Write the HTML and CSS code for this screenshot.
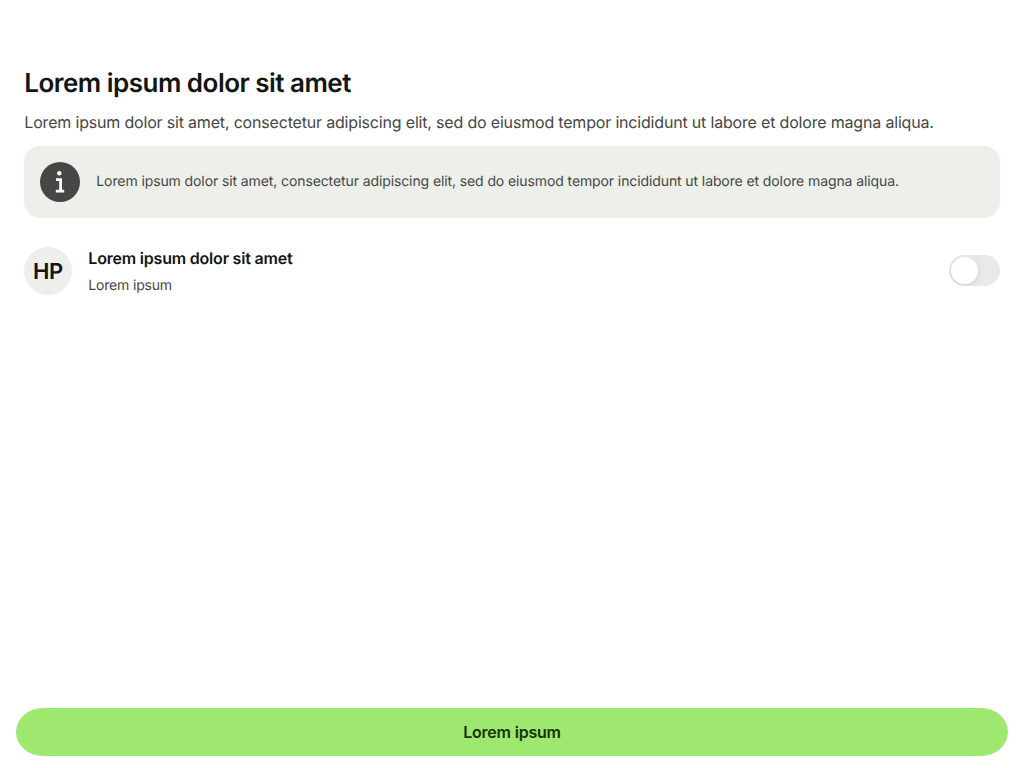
FILE: index.html
```html
<!DOCTYPE html>
<html lang="en">
<head>
<meta charset="utf-8">
<title>Settings</title>
<link rel="stylesheet" href="styles.css">
</head>
<body>
<main class="screen">
  <section class="content">
    <h1 class="title">Lorem ipsum dolor sit amet</h1>
    <p class="lead">Lorem ipsum dolor sit amet, consectetur adipiscing elit, sed do eiusmod tempor incididunt ut labore et dolore magna aliqua.</p>
    <div class="notice">
      <svg class="notice-icon" viewBox="0 0 40 40" aria-hidden="true">
        <circle cx="20" cy="20" r="20" fill="#454745"/>
        <circle cx="19.3" cy="11.3" r="2.2" fill="#fff"/>
        <path d="M16 17.6h4.6V29M15.8 29.2h8.4" fill="none" stroke="#fff" stroke-width="2.8"/>
      </svg>
      <p class="notice-text">Lorem ipsum dolor sit amet, consectetur adipiscing elit, sed do eiusmod tempor incididunt ut labore et dolore magna aliqua.</p>
    </div>
    <div class="row">
      <div class="avatar">HP</div>
      <div class="row-body">
        <div class="row-title">Lorem ipsum dolor sit amet</div>
        <div class="row-sub">Lorem ipsum</div>
      </div>
      <div class="switch" role="switch" aria-checked="false"><span class="knob"></span></div>
    </div>
  </section>
  <button class="action">Lorem ipsum</button>
</main>
</body>
</html>
```
FILE: styles.css
```css
* { box-sizing: border-box; }
body { margin: 0; background: #fff; font-family: Inter, sans-serif; text-rendering: geometricPrecision; }
.screen { height: 768px; display: flex; flex-direction: column; justify-content: space-between; padding: 67px 16px 12px; }
.content { padding: 0 8px; }
.title { margin: 0; padding-left: 0.3px; font-size: 26px; line-height: 34px; font-weight: 600; letter-spacing: -0.52px; color: #121511; }
.lead { margin: 9px 0 0; padding-left: 0.3px; font-size: 16px; line-height: 24px; letter-spacing: -0.182px; color: #454745; white-space: nowrap; }
.notice { margin-top: 12px; height: 72px; padding: 16px; display: flex; gap: 16px; border-radius: 16px; background: #edefeb; }
.notice-icon { width: 40px; height: 40px; flex: none; }
.notice-text { margin: 9px 0 0; padding-left: 0.3px; font-size: 14px; line-height: 22px; letter-spacing: -0.104px; color: #454745; white-space: nowrap; }
.row { display: flex; align-items: center; margin-top: 29px; height: 48px; }
.avatar { width: 48px; height: 48px; padding: 1px 0 0; border-radius: 50%; background: #edefeb; display: flex; align-items: center; justify-content: center; font-size: 22px; font-weight: 600; letter-spacing: -0.4px; color: #121511; }
.row-body { flex: 1; align-self: flex-start; margin: -1px 0 0 16px; padding-left: 0.3px; }
.row-title { font-size: 16px; line-height: 24px; font-weight: 600; letter-spacing: -0.2px; color: #121511; }
.row-sub { margin-top: 5px; font-size: 14px; line-height: 22px; letter-spacing: -0.18px; color: #454745; }
.switch { width: 51px; height: 31px; margin-bottom: 1px; border-radius: 16px; padding: 2px; background: #e9e9ea; overflow: hidden; }
.knob { display: block; width: 27px; height: 27px; border-radius: 50%; background: #fff; box-shadow: 0 2px 6px rgba(0,0,0,.1); }
.action { height: 48px; border: 0; border-radius: 27px / 24px; background: #9fe870; color: #163300; font: 600 16px/24px Inter, sans-serif; letter-spacing: -0.2px; }
```
